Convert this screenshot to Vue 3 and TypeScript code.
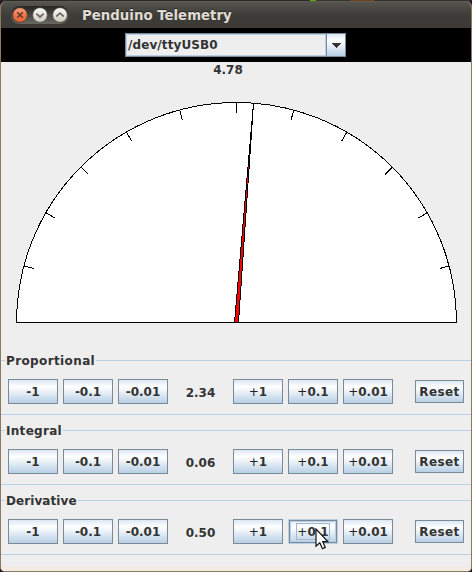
<script setup lang="ts">
import { ref } from 'vue'

interface Gain {
  name: string
  value: number
  tracking: number
  focused?: string
}

const port = ref('/dev/ttyUSB0')
const angle = ref('4.78')
const gains = ref<Gain[]>([
  { name: 'Proportional', value: 2.34, tracking: 0.38 },
  { name: 'Integral', value: 0.06, tracking: 0.3 },
  { name: 'Derivative', value: 0.5, tracking: 0.08, focused: '+0.1' },
])
const down = ['-1', '-0.1', '-0.01']
const up = ['1', '0.1', '0.01']

const cx = 235.7
const cy = 260.9
const ticks = Array.from({ length: 11 }, (_, i) => {
  const a = ((i + 1) * 15 * Math.PI) / 180
  return {
    x1: cx + 220 * Math.cos(a),
    y1: cy - 220 * Math.sin(a),
    x2: cx + 210 * Math.cos(a),
    y2: cy - 210 * Math.sin(a),
  }
})

function step(g: Gain, label: string) {
  g.value += Number(label)
}
</script>

<template>
  <div class="desktop">
    <div class="window">
      <header class="titlebar">
        <div class="controls">
          <svg width="60" height="20" viewBox="0 0 60 20">
            <defs>
              <linearGradient id="tray" x1="0" y1="0" x2="0" y2="1">
                <stop offset="0" stop-color="#252521" />
                <stop offset="1" stop-color="#6a6962" />
              </linearGradient>
              <linearGradient id="orange" x1="0" y1="0" x2="0" y2="1">
                <stop offset="0" stop-color="#f8a486" />
                <stop offset=".5" stop-color="#f1774a" />
                <stop offset="1" stop-color="#e9632f" />
              </linearGradient>
              <linearGradient id="pearl" x1="0" y1="0" x2="0" y2="1">
                <stop offset="0" stop-color="#fbfaf7" />
                <stop offset="1" stop-color="#cfcabd" />
              </linearGradient>
            </defs>
            <rect x="0.5" y="1" width="58.5" height="18" rx="9" fill="url(#tray)" />
            <circle cx="10" cy="10" r="7.3" fill="url(#orange)" stroke="#5b3022" stroke-width=".7" />
            <circle cx="30" cy="10" r="7.3" fill="url(#pearl)" stroke="#44433d" stroke-width=".6" />
            <circle cx="50" cy="10" r="7.3" fill="url(#pearl)" stroke="#44433d" stroke-width=".6" />
            <path d="M7.2 7.2l5.6 5.6M12.8 7.2l-5.6 5.6" stroke="#653c2c" stroke-width="1.6" />
            <path d="M26.3 8.7l3.7 3.3l3.7-3.3M46.3 11.5l3.7-3.3l3.7 3.3" fill="none" stroke="#6b6962" stroke-width="1.7" />
          </svg>
        </div>
        <h1 class="title">Penduino Telemetry</h1>
      </header>

      <div class="portbar">
        <div class="combo">
          <span class="combo-value">{{ port }}</span>
          <span class="combo-arrow">
            <svg width="10" height="5" viewBox="0 0 10 5" shape-rendering="crispEdges">
              <path d="M0 0h10L5 5z" fill="#333" />
            </svg>
          </span>
        </div>
      </div>

      <main class="content">
        <section class="gauge">
          <svg class="dial" width="470" height="270" viewBox="0 0 470 270" shape-rendering="crispEdges">
            <path d="M15.5 260.5A220 220 0 0 1 455.5 260.5Z" fill="#fff" stroke="#000" />
            <line v-for="(t, i) in ticks" :key="i" :x1="t.x1" :y1="t.y1" :x2="t.x2" :y2="t.y2" stroke="#000" />
            <path d="M233.5 260.5L252.5 41.5L237.5 260.5Z" fill="#f00" stroke="#000" stroke-linejoin="bevel" />
            <path d="M234 260.5h4" stroke="#000" />
          </svg>
          <span class="reading">{{ angle }}</span>
        </section>

        <section v-for="g in gains" :key="g.name" class="group">
          <h2 class="legend">
            <span class="legend-text" :style="{ letterSpacing: g.tracking + 'px' }">{{ g.name }}</span>
          </h2>
          <div class="row">
            <button v-for="l in down" :key="l" class="btn" @click="step(g, l)">{{ l }}</button>
            <span class="value">{{ g.value.toFixed(2) }}</span>
            <button
              v-for="l in up"
              :key="l"
              class="btn"
              :class="{ focused: g.focused === '+' + l }"
              @click="step(g, l)"
            >
              <span class="label"><span class="plus">+</span>{{ l }}</span>
              <svg v-if="g.focused === '+' + l" class="pointer" width="14" height="22" viewBox="0 0 14 22">
                <path d="M1 1V18.2L4.8 14.7L7.5 20.7L10.3 19.4L7.7 13.6H12.8Z" fill="#fff" stroke="#111" stroke-width="1.2" />
              </svg>
            </button>
            <button class="btn reset" @click="g.value = 0">Reset</button>
          </div>
        </section>
      </main>
      <footer class="edge"></footer>
    </div>
  </div>
</template>

<style>
body {
  margin: 0;
}
</style>

<style scoped>
.desktop {
  box-sizing: border-box;
  width: 472px;
  height: 572px;
  padding-top: 1px;
  background: linear-gradient(90deg, #2a2925 0 310px, #5bab08 310px 316px, #34332d 316px 350px, #75421f 350px 374px, #302f2a 374px) 0 0 / 100% 1px no-repeat, #2b0b26;
  font-family: "DejaVu Sans", sans-serif;
  font-weight: bold;
  font-size: 12px;
  color: #333;
}
.window {
  box-sizing: border-box;
  display: flex;
  flex-direction: column;
  height: 571px;
  border: solid #8a7a62;
  border-width: 0 1px 1px;
  border-radius: 6px 6px 5px 5px;
  overflow: hidden;
  background: #eee;
}
.titlebar {
  display: flex;
  align-items: center;
  flex: none;
  height: 27px;
  padding-left: 9px;
  background: linear-gradient(#64635b 0, #55544e 1px, #3c3b37 15px, #3c3b37);
}
.controls {
  display: flex;
  width: 60px;
}
.title {
  margin: 0 0 0 12px;
  padding-top: 2px;
  font-size: 13.33px;
  line-height: 20px;
  color: #dfdbd2;
  text-shadow: 0 -1px 0 #292825;
  white-space: nowrap;
}
.portbar {
  box-sizing: border-box;
  display: flex;
  flex: none;
  height: 34px;
  padding: 5px 0 0 124px;
  background: #000;
}
.combo {
  box-sizing: border-box;
  display: flex;
  width: 221px;
  height: 24px;
  border: 1px solid #7a8a99;
  background: #eee;
}
.combo-value {
  box-sizing: border-box;
  width: 200px;
  padding-left: 1px;
  border: 1px solid #b8cfe5;
  line-height: 21px;
  letter-spacing: 0.1px;
}
.combo-arrow {
  box-sizing: border-box;
  display: flex;
  align-items: center;
  justify-content: center;
  flex: 1;
  padding-top: 1px;
  border-left: 1px solid #7a8a99;
  background: linear-gradient(#dde8f3, #fff 30%, #b8cfe5);
}
.content {
  flex: 1;
}
.gauge {
  display: grid;
  height: 291px;
}
.dial,
.reading {
  grid-area: 1 / 1;
}
.reading {
  justify-self: center;
  margin-right: 16px;
  line-height: 16px;
}
.group {
  box-sizing: border-box;
  height: 70px;
}
.legend {
  display: flex;
  align-items: center;
  height: 14px;
  margin: 0;
  font-size: 12px;
  line-height: 14px;
}
.legend-text {
  height: 14px;
  line-height: 16px;
}
.legend::before {
  content: "";
  width: 4px;
  height: 1px;
  margin-right: 1px;
  background: #b8cfe5;
}
.legend::after {
  content: "";
  flex: 1;
  height: 1px;
  margin-left: 1px;
  background: #b8cfe5;
}
.row {
  box-sizing: border-box;
  display: flex;
  align-items: center;
  gap: 5px;
  height: 48px;
  padding: 2px 0 0 7px;
  border-bottom: 1px solid #b8cfe5;
}
.btn {
  position: relative;
  box-sizing: border-box;
  width: 50px;
  height: 25px;
  margin: 0;
  padding: 1px 0 0;
  border: 1px solid #7a8a99;
  background: linear-gradient(#dde8f3, #fff 30%, #b8cfe5);
  font: inherit;
  line-height: 23px;
  color: inherit;
  white-space: nowrap;
}
.plus {
  font-weight: normal;
  color: #222;
}
.value {
  width: 55px;
  padding-top: 2px;
  text-align: center;
  line-height: 20px;
}
.reset {
  width: 49px;
  height: 23px;
  margin-left: 17px;
  line-height: 21px;
  letter-spacing: 0.4px;
}
.focused {
  border-color: #b8cfe5;
  box-shadow: inset 0 0 0 1px #7a8a99, inset 0 0 0 2px #b8cfe5;
  line-height: 21px;
}
.focused .label {
  display: inline-block;
  height: 15px;
  line-height: 16px;
  outline: 1px solid #a3b8cc;
}
.pointer {
  position: absolute;
  left: 26px;
  top: 8px;
}
.edge {
  flex: none;
  height: 4px;
  background: #f2ebdf;
}
</style>
